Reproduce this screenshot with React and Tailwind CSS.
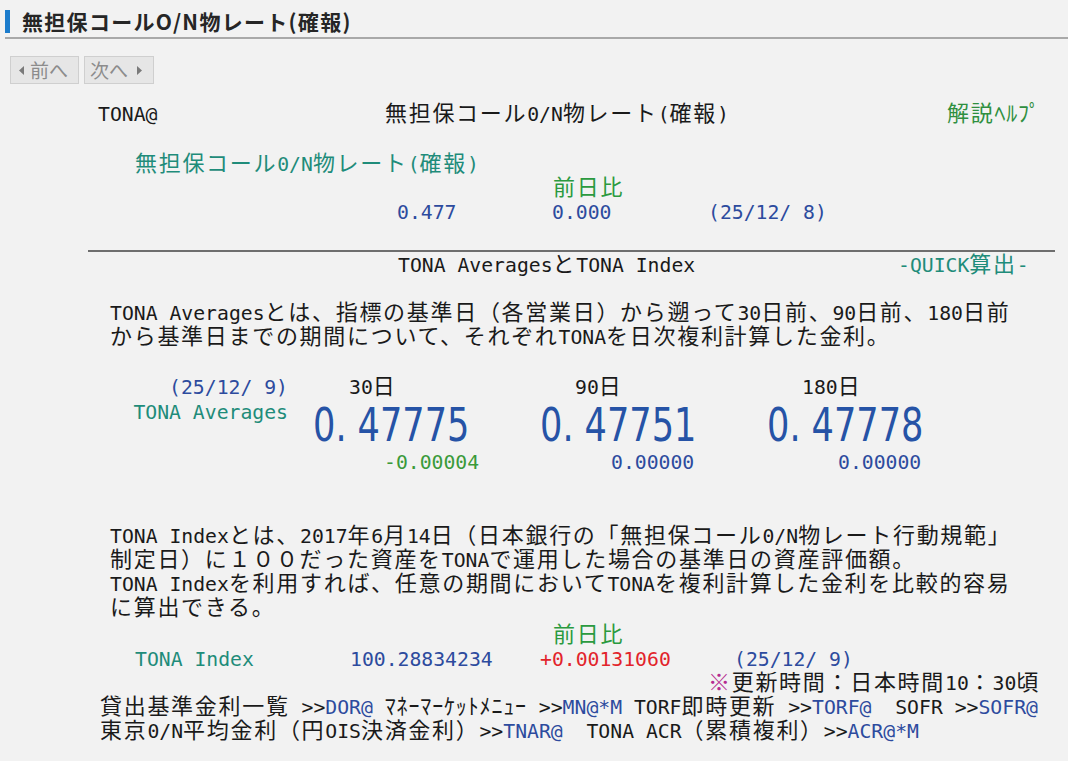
const WIDE = "font-['Noto_Sans_CJK_JP'] text-[22px] tracking-[1.7px] leading-[0]";
const HALF = "font-['Noto_Sans_CJK_JP'] text-[22px] tracking-[0.85px] leading-[0]";

// split a line into runs so that full-width chars take two mono cells
function kind(ch) {
  const c = ch.codePointAt(0);
  if (c >= 0xff61 && c <= 0xff9f) return "h";
  if (c >= 0x2e80 || c === 0x203b) return "w";
  return "a";
}

function M({ children }) {
  const runs = [];
  for (const ch of String(children)) {
    const k = kind(ch);
    const last = runs[runs.length - 1];
    if (last && last.k === k) last.t += ch;
    else runs.push({ k, t: ch });
  }
  return runs.map((r, i) =>
    r.k === "a" ? (
      <span key={i}>{r.t}</span>
    ) : (
      <span key={i} className={r.k === "w" ? WIDE : HALF}>
        {r.t}
      </span>
    )
  );
}

function Line({ children, className = "" }) {
  return (
    <div className={"h-[24px] leading-[24px] whitespace-pre " + className}>
      {children}
    </div>
  );
}

function Link({ children }) {
  return <span className="text-[#2d4b9e]">{children}</span>;
}

function Tri({ dir }) {
  return (
    <svg width="5" height="9" viewBox="0 0 5 9" className="shrink-0">
      {dir === "l" ? (
        <path d="M5 0 L0 4.5 L5 9 Z" fill="#7a7a7a" />
      ) : (
        <path d="M0 0 L5 4.5 L0 9 Z" fill="#7a7a7a" />
      )}
    </svg>
  );
}

function Avg({ label, value, diff, diffColor, labelPad }) {
  const [a, b] = value.split(".");
  return (
    <div className="w-[227px]">
      <Line className={labelPad}>
        <M>{label}</M>
      </Line>
      <div className="mt-[5px] h-[40px] leading-[40px] font-['DejaVu_Sans_Condensed','DejaVu_Sans',sans-serif] text-[46px] text-[#2653a6] whitespace-pre">
        <span className="inline-block origin-left scale-x-[0.85]">
          {a}.<span className="ml-[13px]">{b}</span>
        </span>
      </div>
      <Line className={"mt-[6px] pl-[71px] " + diffColor}>{diff}</Line>
    </div>
  );
}

export default function App() {
  return (
    <div className="min-h-screen bg-[#f2f2f2] text-[#1a1a1a] font-['DejaVu_Sans_Mono'] text-[19.75px]">
      {/* header */}
      <div className="pt-[9px] pl-[5px]">
        <div className="flex items-center h-[25px]">
          <span className="w-[5px] h-[23px] bg-[#1c7ccc]" />
          <h1 className="ml-[12px] font-['Noto_Sans_CJK_JP'] font-bold text-[21px] leading-[25px] tracking-[1.3px] text-[#262626]">
            無担保コールO/N物レート(確報)
          </h1>
        </div>
        <div className="mt-[3px] h-[2px] bg-[#a9a9a9]" />
      </div>

      <div className="flex gap-[5px] pl-[10px] mt-[17px]">
        <button className="flex items-center h-[28px] w-[69px] border border-[#cfcfcf] bg-[#e6e6e6] text-[#8c8c8c] font-['Noto_Sans_CJK_JP'] text-[19px] pl-[8px] gap-[6px]">
          <Tri dir="l" />
          前へ
        </button>
        <button className="flex items-center h-[28px] w-[70px] border border-[#cfcfcf] bg-[#e6e6e6] text-[#8c8c8c] font-['Noto_Sans_CJK_JP'] text-[19px] pl-[5px] gap-[9px]">
          次へ
          <Tri dir="r" />
        </button>
      </div>

      {/* title row */}
      <div className="mt-[19px] flex pl-[98px]">
        <Line className="w-[287px]">TONA@</Line>
        <Line className="w-[562px]">
          <M>無担保コール0/N物レート(確報)</M>
        </Line>
        <Line className="text-[#2f8f3f]">
          <M>解説ﾍﾙﾌﾟ</M>
        </Line>
      </div>

      <Line className="mt-[26px] pl-[135px] text-[#1f8c7a]">
        <M>無担保コール0/N物レート(確報)</M>
      </Line>
      <Line className="pl-[553px] text-[#2b9a3f]">
        <M>前日比</M>
      </Line>
      <div className="flex pl-[397px] text-[#2d4b9e]">
        <Line className="w-[155px]">0.477</Line>
        <Line className="w-[156px]">0.000</Line>
        <Line>(25/12/ 8)</Line>
      </div>

      <div className="mt-[25px] ml-[88px] w-[967px] h-[2px] bg-[#6e6e6e]" />

      <div className="mt-[2px] flex pl-[398px]">
        <Line className="w-[500px]">
          <M>TONA AveragesとTONA Index</M>
        </Line>
        <Line className="text-[#1f8c7a]">
          <M>-QUICK算出-</M>
        </Line>
      </div>

      <div className="mt-[24px] pl-[110px]">
        <Line>
          <M>TONA Averagesとは、指標の基準日（各営業日）から遡って30日前、90日前、180日前</M>
        </Line>
        <Line>
          <M>から基準日までの期間について、それぞれTONAを日次複利計算した金利。</M>
        </Line>
      </div>

      {/* averages */}
      <div className="mt-[26px] flex pl-[110px]">
        <div className="w-[178px] text-right">
          <Line className="text-[#2d4b9e]">(25/12/ 9)</Line>
          <Line className="mt-[1px] text-[#1f8c7a]">TONA Averages</Line>
        </div>
        <div className="ml-[25px] flex">
          <Avg label="30日" value="0.47775" diff="-0.00004" diffColor="text-[#3a9a3a]" labelPad="pl-[36px]" />
          <Avg label="90日" value="0.47751" diff="0.00000" diffColor="text-[#2d4b9e]" labelPad="pl-[35px]" />
          <Avg label="180日" value="0.47778" diff="0.00000" diffColor="text-[#2d4b9e]" labelPad="pl-[35px]" />
        </div>
      </div>

      <div className="mt-[50px] pl-[110px]">
        <Line>
          <M>TONA Indexとは、2017年6月14日（日本銀行の「無担保コール0/N物レート行動規範」</M>
        </Line>
        <Line>
          <M>制定日）に１００だった資産をTONAで運用した場合の基準日の資産評価額。</M>
        </Line>
        <Line>
          <M>TONA Indexを利用すれば、任意の期間においてTONAを複利計算した金利を比較的容易</M>
        </Line>
        <Line>
          <M>に算出できる。</M>
        </Line>
      </div>

      <Line className="mt-[3px] pl-[553px] text-[#2b9a3f]">
        <M>前日比</M>
      </Line>
      <div className="flex pl-[135px]">
        <Line className="w-[215px] text-[#1f8c7a]">TONA Index</Line>
        <Line className="w-[190px] text-[#2d4b9e]">100.28834234</Line>
        <Line className="w-[194px] text-[#e2242b]">+0.00131060</Line>
        <Line className="text-[#2d4b9e]">(25/12/ 9)</Line>
      </div>
      <Line className="pl-[708px]">
        <span className="text-[#b52a90]">
          <M>※</M>
        </span>
        <M>更新時間：日本時間10：30頃</M>
      </Line>

      <div className="pl-[100px]">
        <Line>
          <M>貸出基準金利一覧 &gt;&gt;</M>
          <Link>DOR@</Link> <M>ﾏﾈｰﾏｰｹｯﾄﾒﾆｭｰ</M> &gt;&gt;<Link>MN@*M</Link> <M>TORF即時更新</M> &gt;&gt;
          <Link>TORF@</Link>  SOFR &gt;&gt;<Link>SOFR@</Link>
        </Line>
        <Line>
          <M>東京0/N平均金利（円OIS決済金利）</M>&gt;&gt;<Link>TNAR@</Link>  <M>TONA ACR（累積複利）</M>&gt;&gt;
          <Link>ACR@*M</Link>
        </Line>
      </div>
    </div>
  );
}
